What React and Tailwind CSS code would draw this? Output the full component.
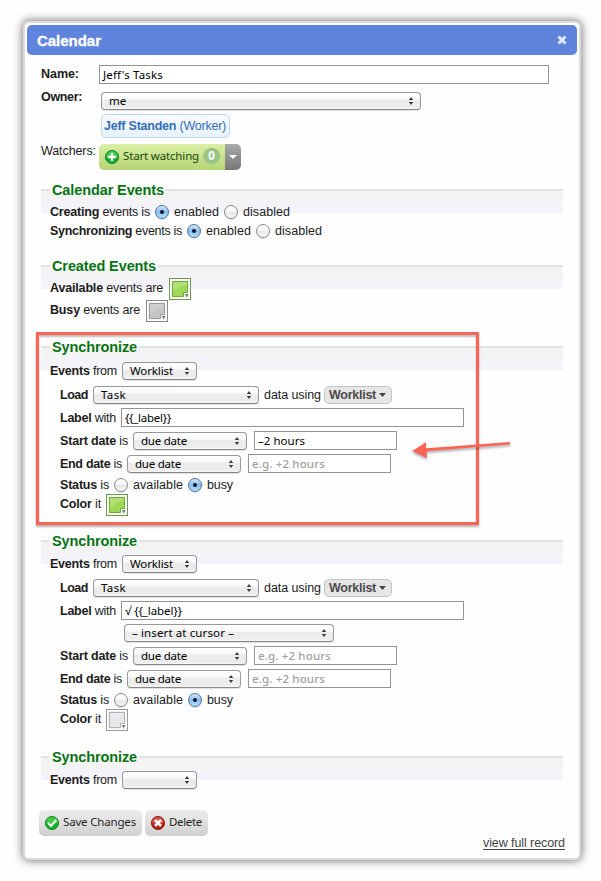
import React, { useLayoutEffect, useRef } from "react";

const SANS = "font-['Liberation_Sans',Arial,sans-serif]";
const LUCIDA = "font-['Noto_Sans','Open_Sans',sans-serif]";

// Text run that spreads its letters evenly over a given width.
function Fit({ w, className = "", children }) {
  const ref = useRef(null);
  useLayoutEffect(() => {
    const el = ref.current;
    el.style.letterSpacing = "0px";
    const natural = el.getBoundingClientRect().width;
    const count = el.textContent.length;
    el.style.letterSpacing = (w - natural) / count + "px";
  }, [w, children]);
  return (
    <span ref={ref} className={"inline-block shrink-0 whitespace-pre align-top " + className}>
      {children}
    </span>
  );
}

function Label({ bold, rest = "", w }) {
  return (
    <Fit w={w} className="text-[12.5px] leading-4 text-[#1c1c1c]">
      <b>{bold}</b>
      {rest}
    </Fit>
  );
}

function Select({ className, text, w, pad = "pl-[7px]" }) {
  return (
    <div className={`flex h-[18px] shrink-0 items-center justify-between rounded-[4px] border border-[#999] border-b-[#888] bg-[linear-gradient(#fff_0%,#f9f9f9_40%,#ececec_42%,#ececec_85%,#f8f8f8_100%)] pr-[6px] shadow-[0_1px_0_#e2e2e2] ${pad} ${className}`}>
      <span className={`${LUCIDA} text-[11.5px] leading-4 text-black`}>
        {text && <Fit w={w}>{text}</Fit>}
      </span>
      <svg width="6" height="8" viewBox="0 0 6 8" className="shrink-0">
        <path d="M3 0 5.2 3H.8ZM3 8 .8 5h4.4Z" fill="#3c3c3c" />
      </svg>
    </div>
  );
}

function Input({ className, text, w, hint }) {
  return (
    <div className={`flex h-[19px] shrink-0 items-center border border-[#949494] bg-white pl-[3px] ${className}`}>
      <span className={`${LUCIDA} mt-px text-[11.5px] leading-4 ${hint ? "font-medium text-[#a0a0a0]" : "text-black"}`}>
        <Fit w={w}>{text}</Fit>
      </span>
    </div>
  );
}

function Radio({ on, className = "" }) {
  return on ? (
    <span className={`flex size-[14px] shrink-0 items-center justify-center rounded-full border border-[#52719c] bg-[linear-gradient(#d3e8fa,#87bbeb_50%,#b5e2ff)] shadow-[0_1px_0_#ddd] ${className}`}>
      <span className="size-1 rounded-full bg-[#06132c]" />
    </span>
  ) : (
    <span className={`size-[14px] shrink-0 rounded-full border border-[#8b8b8b] bg-[linear-gradient(#fff,#f5f5f5_48%,#e6e6e6_52%,#fafafa)] shadow-[0_1px_0_#ddd] ${className}`} />
  );
}

function Swatch({ fill, edge, frame, className }) {
  return (
    <svg width="22" height="22" viewBox="0 0 22 22" className={`shrink-0 ${className}`}>
      <rect x=".5" y=".5" width="21" height="21" fill="#f4f4f4" stroke={frame} />
      <rect x="1.5" y="1.5" width="19" height="19" fill="none" stroke="#fff" />
      <path d="M3.5 3.5H18.5V14.5H14.5V18.5H3.5Z" fill={fill} stroke={edge} />
      <path d="M4 4H18V7Q10 8 4 14Z" fill="#fff" opacity=".18" />
      <path d="M16 16h3.4L17.7 19.4Z" fill="#777" />
    </svg>
  );
}

function Section({ title, w, className, children }) {
  return (
    <section className={className}>
      <div className="flex h-[2px] justify-between">
        <div className="w-[9px] bg-[#e3e3e3]" />
        <div className={`bg-[#e3e3e3] ${w > 105 ? "w-[398px]" : w > 95 ? "w-[405px]" : "w-[424px]"}`} />
      </div>
      <div className="bg-[linear-gradient(#f3f3f3,#f4f4f4_45%,#f3f3f9_55%,#f3f3f9)] bg-[length:100%_22px] bg-no-repeat">
        <h2 className="relative -top-[9px] -mb-[9px] flex h-4 items-center pl-[11px] text-[14.5px] font-bold leading-4 text-[#077314]">
          <Fit w={w}>{title}</Fit>
        </h2>
        <div className="pl-[9px]">{children}</div>
      </div>
    </section>
  );
}

function Word({ w, className = "", children }) {
  return <Fit w={w} className={`text-[12.5px] leading-4 text-[#1c1c1c] ${className}`}>{children}</Fit>;
}

function LoadRow() {
  return (
    <div className="mt-[6px] flex h-[18px] items-center pl-[10px]">
      <Label bold="Load" w={28} />
      <Select className="ml-[5px] w-[166px]" text="Task" w={25} />
      <Word w={57} className="ml-[5px]">data using</Word>
      <div className="ml-[3px] flex h-[18px] w-[68px] items-center rounded-[5px] border border-[#c4c4c4] bg-[#e6e6e6] pl-[4px]">
        <Fit w={47} className="text-[12.5px] leading-4 font-bold text-[#4b4b4b]">Worklist</Fit>
        <svg width="7" height="4" viewBox="0 0 7 4" className="ml-[3px]"><path d="M0 0h7L3.5 4Z" fill="#444" /></svg>
      </div>
    </div>
  );
}

function DateRows({ start, hint }) {
  return (
    <>
      <div className="mt-1 flex h-[19px] items-center pl-[10px]">
        <Label bold="Start date" rest=" is" w={68} />
        <Select className="ml-[5px] w-[114px]" text="due date" w={46} />
        <Input className="ml-[7px] w-[143px]" text={start} w={hint ? 73 : 47} hint={hint} />
      </div>
      <div className="mt-1 flex h-[19px] items-center pl-[10px]">
        <Label bold="End date" rest=" is" w={62} />
        <Select className="ml-[5px] w-[114px]" text="due date" w={46} />
        <Input className="ml-[7px] w-[143px]" text="e.g. +2 hours" w={73} hint />
      </div>
      <div className="mt-1 flex h-4 items-center pl-[10px]">
        <Label bold="Status" rest=" is" w={49} />
        <Radio className="ml-[5px]" />
        <Word w={50} className="ml-[5px]">available</Word>
        <Radio on className="ml-[5px]" />
        <Word w={26} className="ml-[5px]">busy</Word>
      </div>
    </>
  );
}

function ColorRow({ children }) {
  return (
    <div className="mt-px flex h-[22px] items-start pl-[10px]">
      <div className="mt-[2px] flex h-4"><Label bold="Color" rest=" it" w={41} /></div>
      {children}
    </div>
  );
}

function FormButton({ className, icon, w, children }) {
  return (
    <div className={`flex h-[26px] items-center rounded-[5px] bg-[linear-gradient(#ebebeb,#e0e0e0_50%,#cfcfcf)] pl-[5px] ${className}`}>
      {icon}
      <Fit w={w} className={`${LUCIDA} -mt-[2px] ml-[3px] text-[11.5px] leading-4 text-[#252525]`}>{children}</Fit>
    </div>
  );
}

function RoundIcon({ light, dark, rim, path, stroke = 2 }) {
  return (
    <svg width="16" height="16" viewBox="0 0 16 16" className="shrink-0">
      <circle cx="8" cy="8" r="6.6" fill={dark} stroke={rim} />
      <path d="M2 8a6 6 0 0 1 12 0Q8 9.5 2 8" fill={light} />
      <path d={path} fill="none" stroke="#fff" strokeWidth={stroke} />
    </svg>
  );
}

export default function App() {
  return (
    <div className={`relative h-[881px] w-[601px] overflow-hidden bg-[#fefefe] px-[20px] pt-[21px] ${SANS}`}>
      <div className="ml-[3px] h-[839px] w-[558px] rounded-[6px] border-2 border-[#dcdcdc] bg-[#fefefe] px-[2px] pt-[2px] shadow-[0_0_8px_1px_rgba(0,0,0,0.5)]">
        <header className="flex h-[30px] items-center justify-between rounded-[5px] bg-[#6083dc] pl-[10px] pr-[10px]">
          <Fit w={64} className="mt-px text-[15px] font-bold leading-4 text-white [-webkit-text-stroke:0.3px_white]">Calendar</Fit>
          <svg width="10" height="10" viewBox="0 0 10 10"><path d="m1.5 1.5 7 7m0-7-7 7" stroke="#dcebfb" strokeWidth="3" /></svg>
        </header>

        <div className="w-[536px] pl-[14px]">
          <div className="mt-[10px] flex h-[19px]">
            <div className="mt-px w-[58px] shrink-0"><Label bold="Name:" w={38} /></div>
            <Input className="w-[450px]" text="Jeff's Tasks" w={60} />
          </div>
          <div className="mt-2 flex h-[46px]">
            <div className="-mt-[3px] w-[60px] shrink-0"><Label bold="Owner:" w={41} /></div>
            <div>
              <Select className="w-[320px]" text="me" w={17} />
              <div className="mt-1 flex h-6 w-[129px] items-center rounded-[5px] border border-[#bcd8ea] bg-[linear-gradient(#f8fbff,#e8f2fe)] pl-[2px]">
                <Fit w={122} className="text-[12.5px] leading-4 text-[#336eb6]"><b>Jeff Standen</b> (Worker)</Fit>
              </div>
            </div>
          </div>
          <div className="mt-[6px] flex h-[26px]">
            <div className="-mt-px w-[58px] shrink-0"><Word w={55}>Watchers:</Word></div>
            <div className="flex h-[26px] w-[126px] items-center rounded-l-[5px] bg-[linear-gradient(#dbefa5,#c9e28d_50%,#b6d477)] pl-[5px]">
              <RoundIcon light="#3cc644" dark="#0cae25" rim="#188b2b" path="M8 3.8v8.4M3.8 8h8.4" stroke={2.4} />
              <Fit w={76} className={`${LUCIDA} -mt-[2px] ml-[3px] text-[11.5px] leading-4 text-[#1c4a10]`}>Start watching</Fit>
              <span className="-mt-[2px] ml-[4px] flex h-[16px] w-[17px] items-center justify-center rounded-[8px] bg-[#9bc587] text-[12px] font-bold leading-4 text-white">0</span>
            </div>
            <div className="flex h-[26px] w-4 items-center justify-center rounded-r-[5px] bg-[linear-gradient(#aaa,#909090_50%,#777)]">
              <svg width="8" height="4" viewBox="0 0 8 4"><path d="M0 0h8L4 4Z" fill="#fff" /></svg>
            </div>
          </div>

          <Section title="Calendar Events" w={112} className="mt-[19px]">
            <div className="mt-[6px] flex h-4 items-center">
              <Label bold="Creating" rest=" events is" w={100} />
              <Radio on className="ml-[5px]" />
              <Word w={45} className="ml-[5px]">enabled</Word>
              <Radio className="ml-[5px]" />
              <Word w={47} className="ml-[5px]">disabled</Word>
            </div>
            <div className="mt-[3px] flex h-4 items-center">
              <Label bold="Synchronizing" rest=" events is" w={132} />
              <Radio on className="ml-[5px]" />
              <Word w={45} className="ml-[5px]">enabled</Word>
              <Radio className="ml-[5px]" />
              <Word w={47} className="ml-[5px]">disabled</Word>
            </div>
          </Section>

          <Section title="Created Events" w={104} className="mt-[26px]">
            <div className="mt-1 flex h-[22px]">
              <div className="mt-[2px] flex h-4"><Label bold="Available" rest=" events are" w={113} /></div>
              <Swatch fill="#9fd857" edge="#71aa3a" frame="#6f984d" className="ml-[6px]" />
            </div>
            <div className="flex h-[22px]">
              <div className="mt-[2px] flex h-4"><Label bold="Busy" rest=" events are" w={90} /></div>
              <Swatch fill="#c5c5c5" edge="#9a9a9a" frame="#888" className="ml-[6px]" />
            </div>
          </Section>

          <Section title="Synchronize" w={85} className="mt-6">
            <div className="mt-[7px] flex h-[18px] items-center">
              <Label bold="Events" rest=" from" w={67} />
              <Select className="ml-[5px] w-[75px]" text="Worklist" w={43} />
            </div>
            <LoadRow />
            <div className="mt-1 flex h-[19px] items-center pl-[10px]">
              <Label bold="Label" rest=" with" w={56} />
              <Input className="ml-[5px] w-[343px]" text="{{_label}}" w={46} />
            </div>
            <DateRows start="–2 hours" />
            <ColorRow>
              <Swatch fill="#9fd857" edge="#71aa3a" frame="#6f984d" className="ml-[5px]" />
            </ColorRow>
          </Section>

          <Section title="Synchronize" w={85} className="mt-6">
            <div className="mt-[6px] flex h-[18px] items-center">
              <Label bold="Events" rest=" from" w={67} />
              <Select className="ml-[5px] w-[75px]" text="Worklist" w={43} />
            </div>
            <LoadRow />
            <div className="mt-1 flex h-[19px] items-center pl-[10px]">
              <Label bold="Label" rest=" with" w={56} />
              <Input className="ml-[5px] w-[343px]" text="√ {{_label}}" w={57} />
            </div>
            <div className="mt-1 flex h-[18px] pl-[74px]">
              <Select className="w-[210px]" text="– insert at cursor –" w={102} />
            </div>
            <DateRows start="e.g. +2 hours" hint />
            <ColorRow>
              <Swatch fill="#e5e8e8" edge="#b0b0b0" frame="#999" className="ml-[5px]" />
            </ColorRow>
          </Section>

          <Section title="Synchronize" w={85} className="mt-[25px]">
            <div className="mt-[6px] flex h-[18px] items-center">
              <Label bold="Events" rest=" from" w={67} />
              <Select className="ml-[5px] w-[75px]" />
            </div>
          </Section>

          <div className="-ml-[2px] mt-[21px] flex h-[26px] gap-[3px]">
            <FormButton w={73} className="w-[103px]" icon={<RoundIcon light="#42c944" dark="#12ad2a" rim="#218a31" path="m4 8 3 3 5.2-6" />}>Save Changes</FormButton>
            <FormButton w={33} className="w-[63px]" icon={<RoundIcon light="#d74c3d" dark="#b71d16" rim="#922a20" path="m5 5 6 6m0-6-6 6" stroke={2.6} />}>Delete</FormButton>
          </div>
        </div>
        <div className="-mt-[1px] flex h-4 justify-end pr-[12px]">
          <Fit w={82} className="text-[12.5px] leading-4 text-[#444] underline underline-offset-2">view full record</Fit>
        </div>
      </div>

      <div className="absolute left-[36px] top-[332px] h-[193px] w-[443px] border-[3px] border-[#f96455] shadow-[0_2px_2px_rgba(0,0,0,0.3),inset_0_2px_2px_rgba(0,0,0,0.25)]" />
      <svg width="104" height="24" viewBox="0 0 104 24" className="absolute left-[409px] top-[438px] drop-shadow-[0_2px_1px_rgba(0,0,0,0.3)]">
        <path d="M3 13 17 4.3v6L101 4v2.6L17.5 13.3 18 20Z" fill="#f96455" />
      </svg>
    </div>
  );
}
